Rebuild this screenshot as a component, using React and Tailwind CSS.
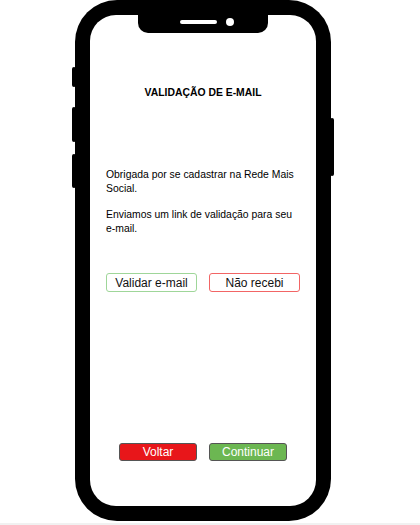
import React from 'react';

// 側面ボタン
function SideButton({ className }) {
    return <div className={`absolute bg-black rounded-[2px] ${className}`} />;
}

export default function App() {
    return (
        <div className="h-[525px] w-full bg-[#f1f1f1] font-['Liberation_Sans',Arial,sans-serif]">
            <div className="h-[523px] bg-white pl-[75px]">
                {/* 端末フレーム */}
                <div className="relative w-[256px] h-[521px] bg-black rounded-[42px] p-[15px]">
                    <SideButton className="left-[-3px] top-[67px] w-[4px] h-[20px]" />
                    <SideButton className="left-[-3px] top-[107px] w-[4px] h-[35px]" />
                    <SideButton className="left-[-3px] top-[154px] w-[4px] h-[34px]" />
                    <SideButton className="right-[-3px] top-[118px] w-[4px] h-[58px]" />

                    {/* 画面 */}
                    <div className="relative h-full bg-white rounded-[26px] flex flex-col items-center px-4">
                        {/* ノッチ */}
                        <div className="absolute left-[48px] top-0 w-[130px] h-[18px] bg-black rounded-b-[10px] flex items-center justify-center gap-[9px]">
                            <div className="w-[37px] h-[4px] bg-white rounded-full mt-[-4px] ml-[8px]" />
                            <div className="w-[8px] h-[8px] bg-white rounded-full mt-[-4px]" />
                        </div>

                        <h1 className="mt-[71px] text-[10.4px] leading-[14px] font-bold text-black">
                            VALIDAÇÃO DE E-MAIL
                        </h1>

                        <div className="mt-[68px] w-full text-[10.4px] leading-[14px] text-black">
                            <p className="mb-[12px]">Obrigada por se cadastrar na Rede Mais Social.</p>
                            <p>Enviamos um link de validação para seu e-mail.</p>
                        </div>

                        <div className="mt-[37px] flex gap-[12px] w-full">
                            <button className="w-[92px] h-[19px] border border-[#9fd699] rounded-[3px] text-[12px] leading-none text-[#111]">
                                Validar e-mail
                            </button>
                            <button className="w-[92px] h-[19px] border border-[#f26565] rounded-[3px] text-[12px] leading-none text-[#111]">
                                Não recebi
                            </button>
                        </div>

                        <div className="mt-[151px] flex gap-[12px]">
                            <button className="w-[78px] h-[18px] bg-[#e8161a] border border-[#555] rounded-[3px] text-[12px] leading-none text-white">
                                Voltar
                            </button>
                            <button className="w-[78px] h-[18px] bg-[#6cb752] border border-[#555] rounded-[3px] text-[12px] leading-none text-white">
                                Continuar
                            </button>
                        </div>
                    </div>
                </div>
            </div>
        </div>
    );
}
